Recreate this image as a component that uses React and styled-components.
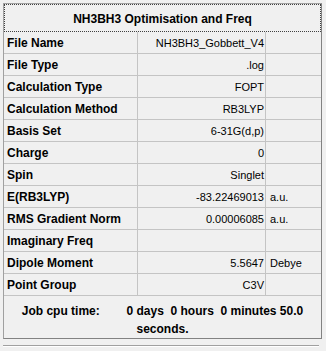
import React from 'react'
import styled, { createGlobalStyle } from 'styled-components'

const GlobalStyle = createGlobalStyle`
  html, body {
    margin: 0;
    padding: 0;
    background: #f0f0f0;
  }
  body {
    font-family: "Liberation Sans", Arial, sans-serif;
    color: #000;
  }
`

const rows = [
  { label: 'File Name', value: 'NH3BH3_Gobbett_V4' },
  { label: 'File Type', value: '.log' },
  { label: 'Calculation Type', value: 'FOPT' },
  { label: 'Calculation Method', value: 'RB3LYP' },
  { label: 'Basis Set', value: '6-31G(d,p)' },
  { label: 'Charge', value: '0' },
  { label: 'Spin', value: 'Singlet' },
  { label: 'E(RB3LYP)', value: '-83.22469013', unit: 'a.u.' },
  { label: 'RMS Gradient Norm', value: '0.00006085', unit: 'a.u.' },
  { label: 'Imaginary Freq', value: '' },
  { label: 'Dipole Moment', value: '5.5647', unit: 'Debye' },
  { label: 'Point Group', value: 'C3V' },
]

function App() {
  return (
    <>
      <GlobalStyle />
      <Page>
        <Panel>
          <Title>NH3BH3 Optimisation and Freq</Title>
          <Grid>
            {rows.map((row) => (
              <React.Fragment key={row.label}>
                <LabelCell>{row.label}</LabelCell>
                <ValueCell>{row.value}</ValueCell>
                <UnitCell>{row.unit}</UnitCell>
              </React.Fragment>
            ))}
          </Grid>
          <Footer>
            <FooterLine>{'Job cpu time:        0 days  0 hours  0 minutes 50.0'}</FooterLine>
            <FooterLine>seconds.</FooterLine>
          </Footer>
        </Panel>
        <Separator />
      </Page>
    </>
  )
}

export default App

const Page = styled.div`
  width: 326px;
  height: 351px;
  padding: 3px 0 0 3px;
  box-sizing: border-box;
  background: #f0f0f0;
`

const Panel = styled.div`
  width: 319px;
  box-sizing: border-box;
  border: 1px solid #a0a0a0;
  border-right-color: #828282;
  border-bottom-color: #828282;
  background: #f0f0f0;
`

const Title = styled.div`
  height: 28px;
  box-sizing: border-box;
  border: 1px dotted #404040;
  display: flex;
  align-items: center;
  justify-content: center;
  font-size: 12px;
  font-weight: bold;
  padding-top: 1px;
`

const Grid = styled.div`
  display: grid;
  grid-template-columns: 134px 128px 1fr;
  grid-auto-rows: 22px;
`

const Cell = styled.div`
  box-sizing: border-box;
  border-bottom: 1px solid #c4c4c4;
  display: flex;
  align-items: center;
  white-space: nowrap;
  overflow: hidden;
`

const LabelCell = styled(Cell)`
  border-right: 1px solid #c4c4c4;
  padding-left: 3px;
  font-size: 12px;
  font-weight: bold;
`

const ValueCell = styled(Cell)`
  border-right: 1px solid #c4c4c4;
  justify-content: flex-end;
  padding-right: 1px;
  font-size: 11px;
`

const UnitCell = styled(Cell)`
  padding-left: 4px;
  font-size: 11px;
`

const Footer = styled.div`
  height: 42px;
  box-sizing: border-box;
  padding-top: 6px;
  display: flex;
  flex-direction: column;
  align-items: center;
`

const FooterLine = styled.div`
  font-size: 12px;
  font-weight: bold;
  line-height: 18px;
  white-space: pre;
`

const Separator = styled.div`
  width: 316px;
  margin-top: 6px;
  height: 1px;
  background: #a0a0a0;
  border-bottom: 1px solid #ffffff;
`
